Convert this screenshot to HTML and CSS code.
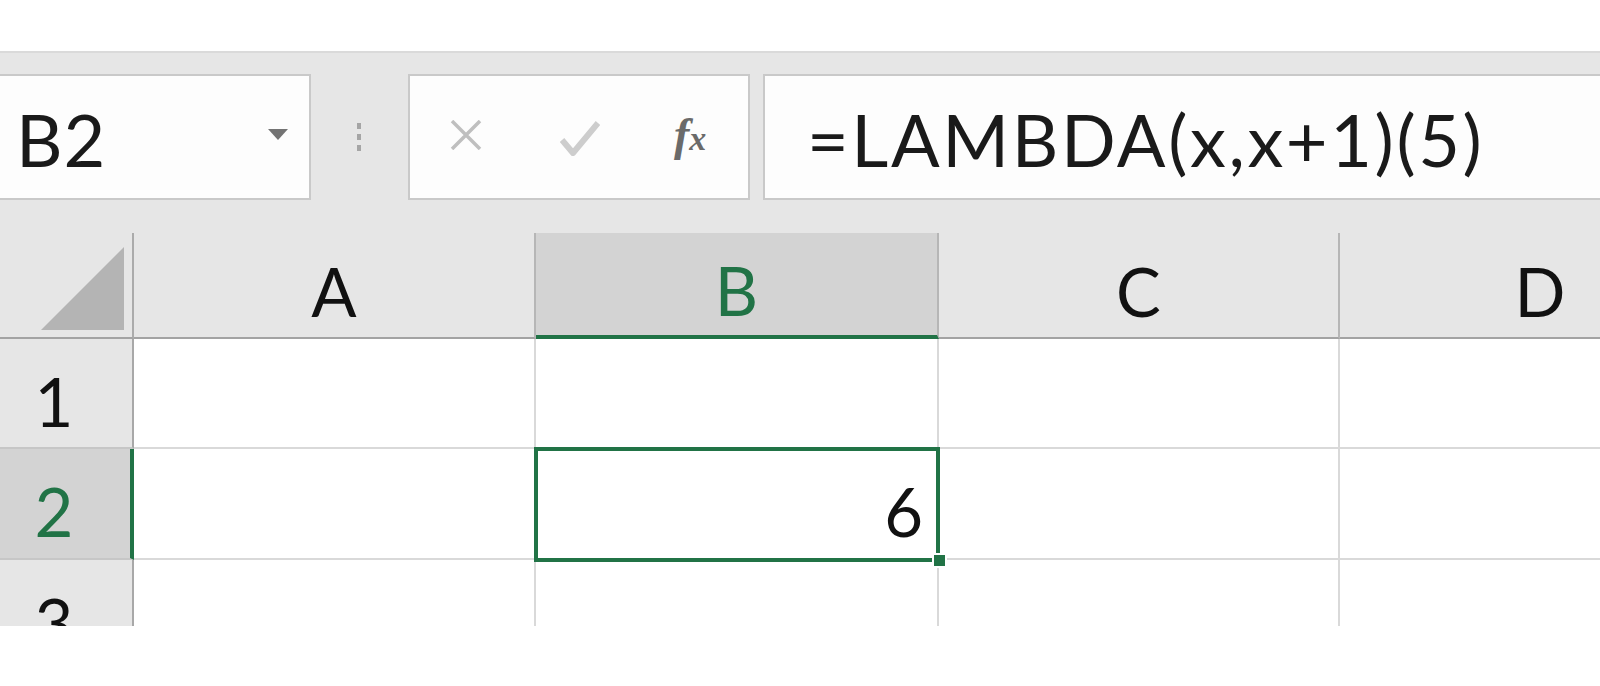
FILE: index.html
```html
<!DOCTYPE html>
<html lang="en">
<head>
<meta charset="utf-8">
<title>Excel LAMBDA</title>
<link rel="stylesheet" href="styles.css">
</head>
<body>
<div class="topgap"></div>
<div class="toolbar">
  <div class="namebox">
    <span class="name">B2</span>
    <span class="caret"></span>
  </div>
  <div class="grip"><i></i><i></i><i></i></div>
  <div class="fxbox">
    <svg class="ico-x" width="32" height="30" viewBox="0 0 32 30"><path d="M2 1 L30 29 M30 1 L2 29" stroke="#bfbfbf" stroke-width="3.5" fill="none"/></svg>
    <svg class="ico-check" width="40" height="36" viewBox="0 0 40 36"><path d="M2 20 L13 33 L38 3" stroke="#cdcdcd" stroke-width="6" fill="none" stroke-linejoin="round"/></svg>
    <span class="fx"><span class="fx-f">f</span><span class="fx-x">x</span></span>
  </div>
  <div class="formula">=LAMBDA(x,x+1)(5)</div>
</div>
<div class="sheet">
  <div class="grid">
    <div class="corner"><div class="tri"></div></div>
    <div class="colhead">A</div>
    <div class="colhead sel">B</div>
    <div class="colhead">C</div>
    <div class="colhead">D</div>

    <div class="rowhead">1</div>
    <div class="cell"></div>
    <div class="cell"></div>
    <div class="cell"></div>
    <div class="cell"></div>

    <div class="rowhead sel">2</div>
    <div class="cell"></div>
    <div class="cell active">6<div class="selbox"></div><div class="handle"></div></div>
    <div class="cell"></div>
    <div class="cell"></div>

    <div class="rowhead">3</div>
    <div class="cell"></div>
    <div class="cell"></div>
    <div class="cell"></div>
    <div class="cell"></div>
  </div>
</div>
</body>
</html>
```
FILE: styles.css
```css
* { box-sizing: border-box; margin: 0; padding: 0; }
html, body { width: 1600px; height: 686px; overflow: hidden; background: #ffffff; }
body { font-family: "Lato", "Open Sans", sans-serif; color: #1a1a1a; }

.topgap { height: 51px; }

.toolbar {
  height: 182px;
  background: #e6e6e6;
  border-top: 2px solid #dadada;
  padding-top: 21px;
  display: flex;
  align-items: flex-start;
}

.namebox {
  width: 314px;
  height: 126px;
  margin-left: -3px;
  background: #fdfdfd;
  border: 2px solid #c9c9c9;
  display: flex;
  align-items: center;
  padding-left: 17px;
  padding-right: 21px;
}
.name { font-size: 72px; line-height: 1; letter-spacing: 1px; padding-top: 4px; }
.caret {
  margin-left: auto;
  margin-bottom: 6px;
  width: 0; height: 0;
  border-left: 10px solid transparent;
  border-right: 10px solid transparent;
  border-top: 11px solid #737373;
}

.grip {
  width: 8px;
  height: 126px;
  margin: 0 45px 0 44px;
  display: flex;
  flex-direction: column;
  align-items: center;
  justify-content: center;
  gap: 5px;
}
.grip i { display: block; width: 4px; height: 6px; background: #a5a5a5; }

.fxbox {
  width: 342px;
  height: 126px;
  background: #fdfdfd;
  border: 2px solid #c9c9c9;
  display: flex;
  align-items: center;
}
.ico-x { margin-left: 40px; margin-top: -4px; }
.ico-check { margin-left: 78px; margin-top: 2px; }
.fx {
  margin-left: 74px;
  font-family: "Liberation Serif", serif;
  font-style: italic;
  font-weight: bold;
  color: #6a6a6a;
  line-height: 1;
  margin-top: -4px;
}
.fx-f { font-size: 46px; }
.fx-x { font-size: 34px; margin-left: 0; }

.formula {
  flex: 1;
  margin-left: 13px;
  height: 126px;
  background: #fdfdfd;
  border: 2px solid #c9c9c9;
  border-right: 0;
  display: flex;
  align-items: center;
  padding-left: 42px;
  padding-top: 4px;
  font-size: 72px;
  line-height: 1;
  letter-spacing: 2.6px;
  white-space: nowrap;
}

.sheet { height: 393px; overflow: hidden; }
.grid {
  width: 1742px;
  display: grid;
  grid-template-columns: 134px 402px 403px 401px 402px;
  grid-template-rows: 106px 110px 111px 110px;
}

.corner {
  background: #e6e6e6;
  border-right: 2px solid #ababab;
  border-bottom: 2px solid #a3a3a3;
  display: flex;
  justify-content: flex-end;
  align-items: flex-end;
  padding: 0 8px 7px 0;
}
.tri {
  width: 83px; height: 83px;
  background: #b4b4b4;
  clip-path: polygon(100% 0, 100% 100%, 0 100%);
}

.colhead {
  background: #e6e6e6;
  border-right: 2px solid #b6b6b6;
  border-bottom: 2px solid #a3a3a3;
  display: flex;
  justify-content: center;
  align-items: center;
  font-size: 67px;
  line-height: 1;
  padding-top: 12px;
  color: #111;
}
.colhead.sel {
  background: #d3d3d3;
  border-bottom: 4px solid #217346;
  color: #217346;
}

.rowhead {
  background: #e6e6e6;
  border-right: 2px solid #a8a8a8;
  border-bottom: 2px solid #c6c6c6;
  display: flex;
  justify-content: center;
  align-items: center;
  padding-right: 24px;
  padding-top: 16px;
  font-size: 67px;
  line-height: 1;
  color: #111;
}
.rowhead.sel {
  background: #d3d3d3;
  border-right: 4px solid #217346;
  padding-right: 22px;
  color: #217346;
}

.cell {
  background: #fff;
  border-right: 2px solid #d9d9d9;
  border-bottom: 2px solid #d9d9d9;
}
.cell.active {
  position: relative;
  display: flex;
  justify-content: flex-end;
  align-items: center;
  padding-right: 14px;
  padding-top: 16px;
  font-size: 67px;
  line-height: 1;
  color: #111;
}
.selbox {
  position: absolute;
  left: -2px; top: -2px; right: -3px; bottom: -4px;
  border: 4px solid #217346;
}
.handle {
  position: absolute;
  right: -10px; bottom: -10px;
  width: 15px; height: 15px;
  background: #217346;
  border: 2px solid #ffffff;
}
```
